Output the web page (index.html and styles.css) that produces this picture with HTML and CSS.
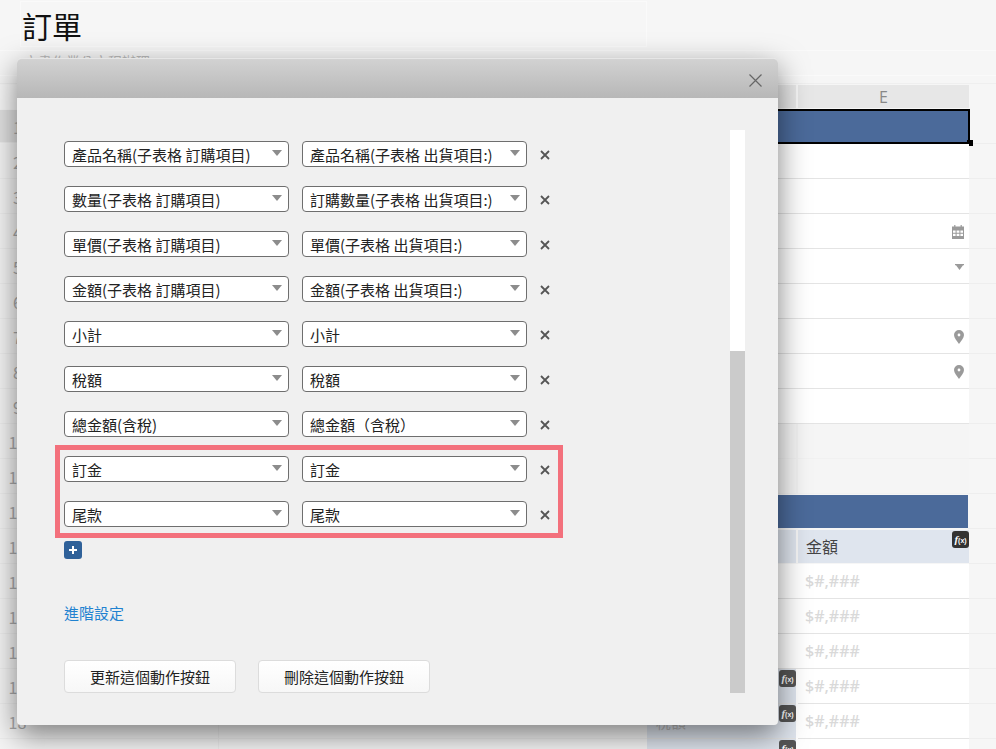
FILE: index.html
```html
<!DOCTYPE html>
<html lang="zh-Hant">
<head>
<meta charset="utf-8">
<title>訂單</title>
<link rel="stylesheet" href="styles.css">
</head>
<body>
<div class="page">
  <header class="page-head">
    <h1 class="title">訂單</h1>
    <p class="subtitle">文書作業公文程辦理</p>
    <div class="toolbar"></div>
  </header>
  <div class="sheet">
    <div class="row colhead"><div class="c0"></div><div class="c1"></div><div class="c2"></div><div class="c3"></div><div class="c4"></div><div class="c5">E</div><div class="c6"></div></div>
    <div class="row selected"><div class="c0">1</div><div class="merge"><span class="handle"></span></div><div class="c6"></div></div>
    <div class="row"><div class="c0">2</div><div class="c1"></div><div class="c2"></div><div class="c3"></div><div class="c4"></div><div class="c5"></div><div class="c6"></div></div>
    <div class="row"><div class="c0">3</div><div class="c1"></div><div class="c2"></div><div class="c3"></div><div class="c4"></div><div class="c5"></div><div class="c6"></div></div>
    <div class="row"><div class="c0">4</div><div class="c1"></div><div class="c2"></div><div class="c3"></div><div class="c4"></div><div class="c5 icon-cell"><svg class="ic-cal" viewBox="0 0 12 14"><path fill="#9a9a9a" fill-rule="evenodd" d="M2.2 0h1.2v1.6h5.2V0h1.2v1.6H12V14H0V1.6h2.2zM1 5.6v2.2h2.6V5.6zm3.6 0v2.2h2.8V5.600zm3.800 0v2.2H11V5.600zM1 8.800V11h2.600V8.800zm3.600 0V11h2.800V8.800zm3.800 0V11H11V8.800z"/></svg></div><div class="c6"></div></div>
    <div class="row"><div class="c0">5</div><div class="c1"></div><div class="c2"></div><div class="c3"></div><div class="c4"></div><div class="c5 icon-cell"><svg class="ic-caret" viewBox="0 0 9 6"><path fill="#9a9a9a" d="M0 0h9v1.200H8L4.500 6 1 1.200H0z"/></svg></div><div class="c6"></div></div>
    <div class="row"><div class="c0">6</div><div class="c1"></div><div class="c2"></div><div class="c3"></div><div class="c4"></div><div class="c5"></div><div class="c6"></div></div>
    <div class="row"><div class="c0">7</div><div class="c1"></div><div class="c2"></div><div class="c3"></div><div class="c4"></div><div class="c5 icon-cell"><svg class="ic-pin" viewBox="0 0 10 14"><path fill="#9a9a9a" fill-rule="evenodd" d="M5 0a5 5 0 0 1 5 5c0 3-3 6-5 9-2-3-5-6-5-9a5 5 0 0 1 5-5zm0 3.600a1.400 1.400 0 1 0 0 2.800 1.400 1.400 0 0 0 0-2.800z"/></svg></div><div class="c6"></div></div>
    <div class="row"><div class="c0">8</div><div class="c1"></div><div class="c2"></div><div class="c3"></div><div class="c4"></div><div class="c5 icon-cell"><svg class="ic-pin" viewBox="0 0 10 14"><path fill="#9a9a9a" fill-rule="evenodd" d="M5 0a5 5 0 0 1 5 5c0 3-3 6-5 9-2-3-5-6-5-9a5 5 0 0 1 5-5zm0 3.600a1.400 1.400 0 1 0 0 2.800 1.400 1.400 0 0 0 0-2.800z"/></svg></div><div class="c6"></div></div>
    <div class="row"><div class="c0">9</div><div class="c1"></div><div class="c2"></div><div class="c3"></div><div class="c4"></div><div class="c5"></div><div class="c6"></div></div>
    <div class="row blank"><div class="c0">10</div><div class="c1"></div><div class="c2"></div><div class="c3"></div><div class="c4"></div><div class="c5"></div><div class="c6"></div></div>
    <div class="row blank"><div class="c0">11</div><div class="c1"></div><div class="c2"></div><div class="c3"></div><div class="c4"></div><div class="c5"></div><div class="c6"></div></div>
    <div class="row section"><div class="c0">12</div><div class="merge"></div><div class="c6"></div></div>
    <div class="row subhead"><div class="c0">13</div><div class="c1"></div><div class="c2"></div><div class="c3"></div><div class="c4"></div><div class="c5">金額<span class="fx dark">f<small>(x)</small></span></div><div class="c6"></div></div>
    <div class="row money"><div class="c0">14</div><div class="c1"></div><div class="c2"></div><div class="c3"></div><div class="c4"></div><div class="c5">$#,###</div><div class="c6"></div></div>
    <div class="row money"><div class="c0">15</div><div class="c1"></div><div class="c2"></div><div class="c3"></div><div class="c4"></div><div class="c5">$#,###</div><div class="c6"></div></div>
    <div class="row money"><div class="c0">16</div><div class="c1"></div><div class="c2"></div><div class="c3"></div><div class="c4"></div><div class="c5">$#,###</div><div class="c6"></div></div>
    <div class="row money calc"><div class="c0">17</div><div class="c1"></div><div class="c2"></div><div class="c3"></div><div class="c4"><span class="fx">f<small>(x)</small></span></div><div class="c5">$#,###</div><div class="c6"></div></div>
    <div class="row money calc"><div class="c0">18</div><div class="c1"></div><div class="c2"></div><div class="c3"></div><div class="c4">稅額<span class="fx">f<small>(x)</small></span></div><div class="c5">$#,###</div><div class="c6"></div></div>
    <div class="row money calc"><div class="c0"></div><div class="c1"></div><div class="c2"></div><div class="c3"></div><div class="c4"><span class="fx">f<small>(x)</small></span></div><div class="c5"></div><div class="c6"></div></div>
  </div>
</div>

<section class="dialog">
  <div class="dialog-head">
    <svg class="close" viewBox="0 0 13 13"><path d="M.5.5l12 12M12.500.5l-12 12" stroke="#666" stroke-width="1.200" fill="none"/></svg>
  </div>
  <div class="dialog-body">
    <div class="content">
      <div class="mappings">
        <div class="map"><div class="sel">產品名稱(子表格 訂購項目)</div><div class="sel">產品名稱(子表格 出貨項目:)</div><svg class="x" viewBox="0 0 10 10"><path d="M1 1l8 8M9 1l-8 8"/></svg></div>
        <div class="map"><div class="sel">數量(子表格 訂購項目)</div><div class="sel">訂購數量(子表格 出貨項目:)</div><svg class="x" viewBox="0 0 10 10"><path d="M1 1l8 8M9 1l-8 8"/></svg></div>
        <div class="map"><div class="sel">單價(子表格 訂購項目)</div><div class="sel">單價(子表格 出貨項目:)</div><svg class="x" viewBox="0 0 10 10"><path d="M1 1l8 8M9 1l-8 8"/></svg></div>
        <div class="map"><div class="sel">金額(子表格 訂購項目)</div><div class="sel">金額(子表格 出貨項目:)</div><svg class="x" viewBox="0 0 10 10"><path d="M1 1l8 8M9 1l-8 8"/></svg></div>
        <div class="map"><div class="sel">小計</div><div class="sel">小計</div><svg class="x" viewBox="0 0 10 10"><path d="M1 1l8 8M9 1l-8 8"/></svg></div>
        <div class="map"><div class="sel">稅額</div><div class="sel">稅額</div><svg class="x" viewBox="0 0 10 10"><path d="M1 1l8 8M9 1l-8 8"/></svg></div>
        <div class="map"><div class="sel">總金額(含稅)</div><div class="sel">總金額（含稅）</div><svg class="x" viewBox="0 0 10 10"><path d="M1 1l8 8M9 1l-8 8"/></svg></div>
        <div class="highlighted">
          <div class="map"><div class="sel">訂金</div><div class="sel">訂金</div><svg class="x" viewBox="0 0 10 10"><path d="M1 1l8 8M9 1l-8 8"/></svg></div>
          <div class="map"><div class="sel">尾款</div><div class="sel">尾款</div><svg class="x" viewBox="0 0 10 10"><path d="M1 1l8 8M9 1l-8 8"/></svg></div>
        </div>
      </div>
      <button class="add" type="button"><svg viewBox="0 0 10 10"><path d="M5 1v8M1 5h8" stroke="#fff" stroke-width="2" fill="none"/></svg></button>
      <a class="advanced" href="#">進階設定</a>
      <div class="actions">
        <button class="btn" type="button">更新這個動作按鈕</button>
        <button class="btn" type="button">刪除這個動作按鈕</button>
      </div>
    </div>
    <div class="scrollbar"><div class="thumb"></div></div>
  </div>
</section>
</body>
</html>
```
FILE: styles.css
```css
* { box-sizing: border-box; }
html, body { margin: 0; height: 100%; overflow: hidden; }
body {
  width: 996px;
  height: 749px;
  position: relative;
  background: #f6f6f6;
  font-family: "Noto Sans CJK TC", "Liberation Sans", sans-serif;
  color: #222;
}
.page { height: 749px; overflow: hidden; }

/* page header */
.page-head { height: 85px; padding-top: 1px; }
.title {
  margin: 0 0 0 20px;
  width: 627px;
  height: 46px;
  padding-left: 1px;
  border: 1px solid #fafafa;
  font-size: 30px;
  line-height: 46px;
  font-weight: 400;
  color: #111;
}
.subtitle {
  margin: 3px 0 0;
  height: 26px;
  padding-left: 24px;
  border-top: 1px solid #fafafa;
  border-bottom: 1px solid #fafafa;
  font-size: 14px;
  line-height: 20px;
  color: #bbb;
}
.toolbar { height: 8px; border-bottom: 1px solid #efefef; }

/* sheet */
.sheet { width: 996px; }
.row { display: flex; height: 35px; }
.row > div { box-shadow: inset 0 -1px #eeeeee; }
.c0 {
  width: 45px;
  flex: none;
  padding-right: 10px;
  text-align: center;
  font-size: 16px;
  line-height: 36px;
  color: #aaa;
  background: #f5f5f5;
}
.c1 { width: 174px; flex: none; border-right: 1px solid #eeeeee; }
.c2 { width: 214px; flex: none; }
.c3 { width: 214px; flex: none; }
.c4 { width: 151px; flex: none; position: relative; background: #fff; }
.c5 { width: 171px; flex: none; position: relative; background: #fff; }
.c6 { flex: 1; background: #f6f6f6; }
.row > .c4, .row > .c5 { box-shadow: inset 0 -1px #e4e4e4; }

.colhead { height: 24px; }
.colhead > div { box-shadow: none; }
.colhead .c0 { background: #f8f8f8; }
.colhead .c4, .colhead .c5 { background: #e7e7e7; height: 23px; }
.colhead .c4 { border-right: 2px solid #f6f6f6; }
.colhead .c5 { color: #888; font: 16px/25px "Open Sans", sans-serif; text-align: center; }
.row.colhead > .c4, .row.colhead > .c5, .colhead .c6 { box-shadow: none; }

.merge { width: 925px; flex: none; position: relative; background: #4b6a9a; }
.selected .c0 { background: #e2e2e2; margin: 1px 0; height: 33px; line-height: 34px; }
.row.selected > .merge { border: 2px solid #000; box-shadow: none; }
.handle { position: absolute; right: -5px; bottom: -4px; width: 6px; height: 6px; background: #000; }

.row.section > .merge { width: 923px; margin: 1px 0; height: 33px; box-shadow: none; }

.icon-cell { display: flex; align-items: center; justify-content: flex-end; padding-right: 5px; }
.ic-cal { width: 12px; height: 14px; }
.ic-caret { width: 9px; height: 6px; }
.ic-pin { width: 10px; height: 14px; }

.row.blank > .c4, .row.blank > .c5 { background: #f5f5f5; box-shadow: inset 0 -1px #f1f1f1; }
.row.blank > .c4 { border-right: 2px solid #f1f1f1; }

.row.subhead > .c4, .row.subhead > .c5 { background: #dfe5ee; box-shadow: none; margin: 1px 0; height: 33px; }
.subhead .c5 { padding-left: 8px; font-size: 16px; line-height: 33px; color: #444; }
.subhead .c4 { border-right: 2px solid #f6f6f6; }

.money .c5 { padding-left: 7px; font: 500 16px/35px "Noto Sans", sans-serif; color: #d9d9d9; }
.row.calc > .c4 { background: #dfe5ee; border-right: 2px solid #fff; font-size: 15px; line-height: 20px; color: #bbb; padding: 8px 0 0 9px; }

.fx {
  position: absolute;
  top: 1px;
  right: 0;
  width: 17px;
  height: 17px;
  border-radius: 3px;
  background: #555;
  color: #fff;
  font: italic 700 11px/16px "Liberation Serif", serif;
  text-align: center;
}
.fx small { font: 700 7px/16px "Liberation Sans", sans-serif; }
.fx.dark { background: #333; }

/* dialog */
.dialog {
  position: absolute;
  left: 17px;
  top: 58px;
  width: 761px;
  height: 667px;
  background: #f0f0f0;
  border-radius: 5px 5px 4px 4px;
  box-shadow: 0 10px 30px rgba(0,0,0,.5);
  display: flex;
  flex-direction: column;
}
.dialog-head {
  height: 40px;
  flex: none;
  padding: 4px 16px 0 0;
  border-top: 1px solid #e6e6e6;
  border-radius: 5px 5px 0 0;
  background: linear-gradient(#d2d2d2, #b7b7b7);
  display: flex;
  align-items: center;
  justify-content: flex-end;
}
.close { width: 13px; height: 13px; }
.dialog-body { flex: 1; display: flex; padding: 32px 33px 32px 47px; }
.content { flex: 1; display: flex; flex-direction: column; }
.mappings { padding-top: 11px; display: flex; flex-direction: column; gap: 19px; }
.map { display: flex; align-items: center; gap: 13px; height: 26px; }
.sel {
  position: relative;
  width: 225px;
  height: 26px;
  padding-left: 7px;
  border: 1px solid #6e6e6e;
  border-radius: 4px;
  background: #fff;
  font-size: 15px;
  line-height: 26px;
  color: #222;
  white-space: nowrap;
}
.sel::after {
  content: "";
  position: absolute;
  right: 6px;
  top: 8px;
  border-left: 5px solid transparent;
  border-right: 5px solid transparent;
  border-top: 6px solid #8c8c8c;
}
.x { width: 10px; height: 10px; margin-top: 1px; stroke: #555; stroke-width: 1.8; fill: none; }
.highlighted {
  width: 508px;
  margin: -11px 0 -11px -9px;
  padding: 6px 0 6px 4px;
  border: 5px solid #f3707c;
  display: flex;
  flex-direction: column;
  gap: 19px;
}
.add {
  align-self: flex-start;
  width: 18px;
  height: 18px;
  margin-top: 14px;
  padding: 4px;
  border: 0;
  border-radius: 3px;
  background: #2f6199;
  display: flex;
}
.add svg { width: 10px; height: 10px; }
.advanced { margin-top: 44px; font-size: 15px; line-height: 20px; color: #1f82d0; text-decoration: none; align-self: flex-start; }
.actions { margin-top: 37px; display: flex; gap: 22px; }
.btn {
  width: 172px;
  height: 33px;
  padding: 0;
  border: 1px solid #dcdcdc;
  border-radius: 4px;
  background: linear-gradient(#fff, #f7f7f7);
  font: 15px "Noto Sans CJK TC", sans-serif;
  color: #222;
}
.scrollbar { width: 15px; height: 563px; flex: none; position: relative; background: #fff; }
.thumb { position: absolute; left: 0; right: 0; top: 221px; bottom: 0; background: #cbcbcb; }
```
